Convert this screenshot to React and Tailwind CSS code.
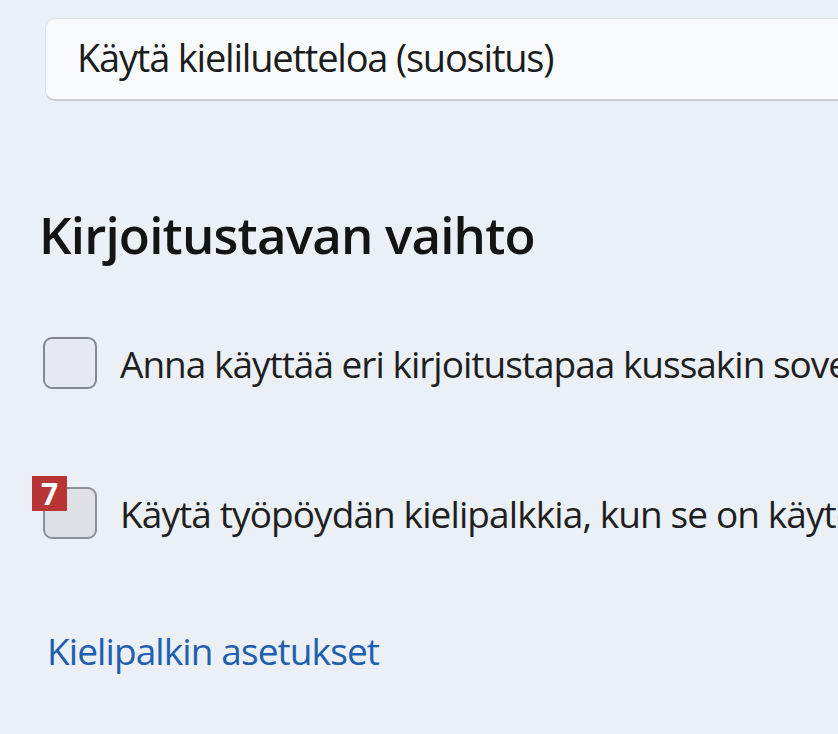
import React from "react";

export default function App() {
  return (
    <div
      className="w-[838px] h-[734px] overflow-hidden bg-[#ebeff6] relative"
      style={{ fontFamily: '"Open Sans", "Noto Sans", sans-serif' }}
    >
      <div className="pt-[18px] pl-[45px]">
        <div className="w-[900px] h-[83px] rounded-[10px] bg-[#f9fafc] border border-[#dde1e6] border-b-[#c9cdd3] border-b-2 flex items-center pl-[31px]">
          <span className="text-[38px] leading-none text-[#1c1c1c] tracking-[-1.2px] whitespace-nowrap mb-[4px]">
            Käytä kieliluetteloa (suositus)
          </span>
        </div>
      </div>

      <div className="pl-[39px] mt-[103px]">
        <h2 className="text-[51px] leading-[60px] font-semibold text-[#141414] tracking-[-0.8px] whitespace-nowrap">
          Kirjoitustavan vaihto
        </h2>
      </div>

      <div className="pl-[43px] mt-[73px] flex flex-col gap-[98px]">
        <div className="flex items-center gap-[23px]">
          <div className="w-[54px] h-[52px] shrink-0 rounded-[9px] border-[2.5px] border-[#85888d] bg-[#e6e9ef]" />
          <span className="text-[37px] leading-none text-[#1f1f1f] tracking-[-1px] whitespace-nowrap">
            Anna käyttää eri kirjoitustapaa kussakin sovellusikkunassa
          </span>
        </div>
        <div className="flex items-center gap-[23px] relative">
          <div className="w-[54px] h-[52px] shrink-0 rounded-[9px] border-[2.5px] border-[#8d9095] bg-[#dde1e6]" />
          <span className="text-[37px] leading-none text-[#1f1f1f] tracking-[-0.9px] whitespace-nowrap">
            Käytä työpöydän kielipalkkia, kun se on käytettävissä
          </span>
          <div className="absolute left-[-11px] top-[-11px] w-[35px] h-[35px] bg-[#b93434] flex items-center justify-center">
            <span className="text-white text-[30px] font-bold leading-none">7</span>
          </div>
        </div>
      </div>

      <div className="pl-[47px] mt-[93px]">
        <span className="text-[37px] leading-none text-[#1f5faf] tracking-[-0.9px] whitespace-nowrap">
          Kielipalkin asetukset
        </span>
      </div>
    </div>
  );
}
